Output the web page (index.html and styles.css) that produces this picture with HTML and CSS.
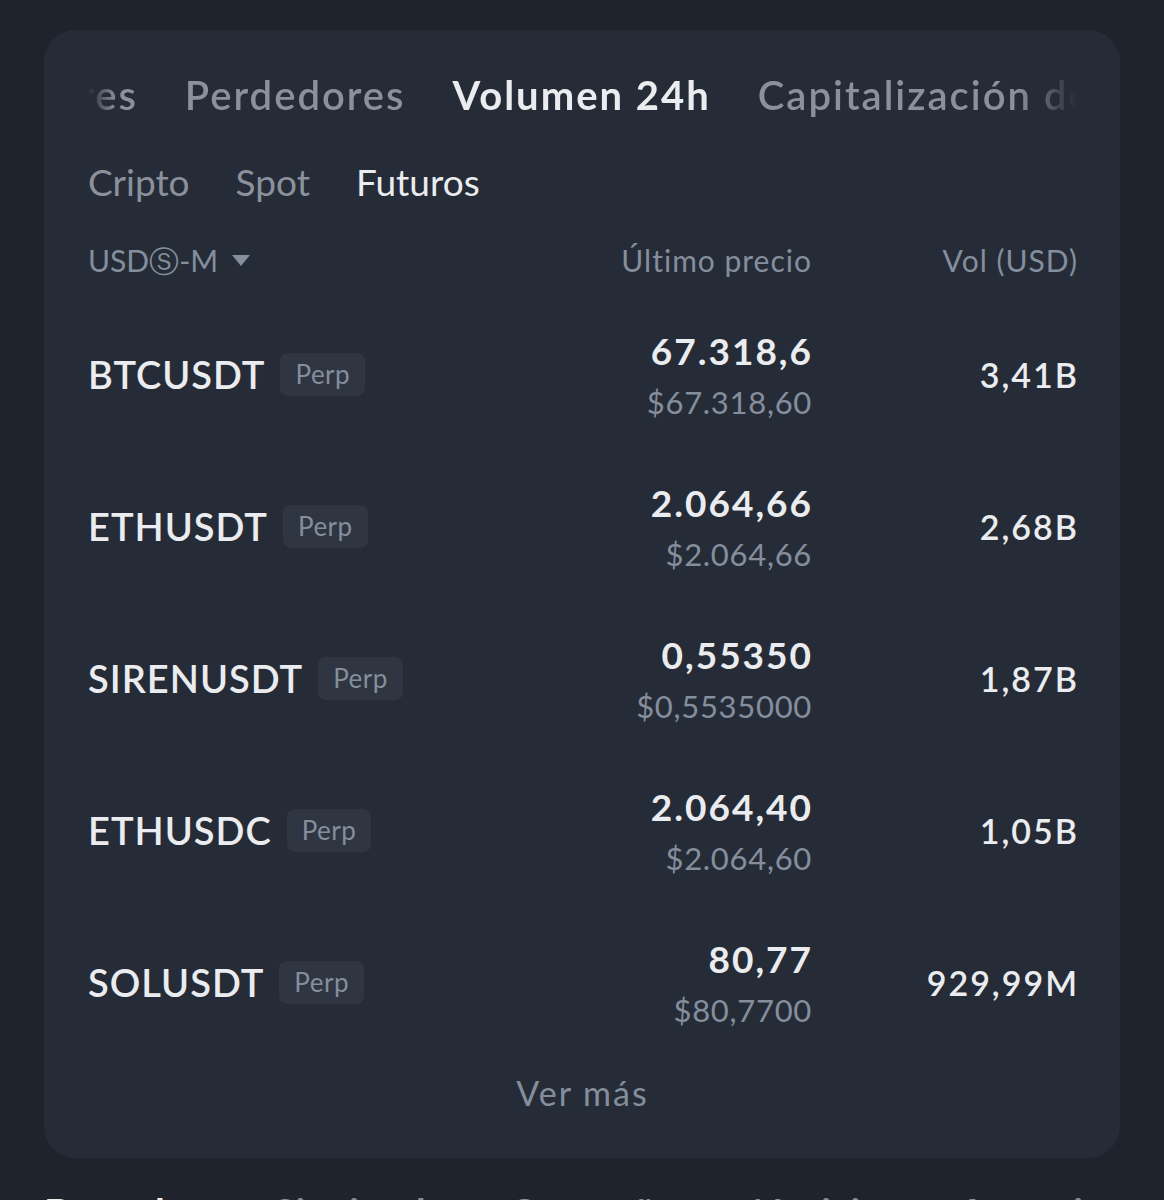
FILE: index.html
```html
<!DOCTYPE html>
<html lang="es">
<head>
    <meta charset="UTF-8">
    <meta name="viewport" content="width=device-width, initial-scale=1.0">
    <title>Mercados - Volumen 24h</title>
    <link rel="stylesheet" href="styles.css">
</head>
<body>
    <div class="card">
        <div class="tabs" id="tabs">
            <span class="tab">Ganadores</span>
            <span class="tab" id="first-visible">Perdedores</span>
            <span class="tab active">Volumen 24h</span>
            <span class="tab">Capitalización de mercado</span>
        </div>

        <div class="subtabs">
            <span class="subtab">Cripto</span>
            <span class="subtab">Spot</span>
            <span class="subtab active">Futuros</span>
        </div>

        <div class="table-head">
            <span class="market">USDⓈ-M <span class="caret"></span></span>
            <span class="col-right">Último precio</span>
            <span class="col-right">Vol (USD)</span>
        </div>

        <div class="rows">
            <div class="row">
                <div class="pair">BTCUSDT <span class="badge">Perp</span></div>
                <div class="price">
                    <div class="last">67.318,6</div>
                    <div class="fiat">$67.318,60</div>
                </div>
                <div class="vol">3,41B</div>
            </div>
            <div class="row">
                <div class="pair">ETHUSDT <span class="badge">Perp</span></div>
                <div class="price">
                    <div class="last">2.064,66</div>
                    <div class="fiat">$2.064,66</div>
                </div>
                <div class="vol">2,68B</div>
            </div>
            <div class="row">
                <div class="pair">SIRENUSDT <span class="badge">Perp</span></div>
                <div class="price">
                    <div class="last">0,55350</div>
                    <div class="fiat">$0,5535000</div>
                </div>
                <div class="vol">1,87B</div>
            </div>
            <div class="row">
                <div class="pair">ETHUSDC <span class="badge">Perp</span></div>
                <div class="price">
                    <div class="last">2.064,40</div>
                    <div class="fiat">$2.064,60</div>
                </div>
                <div class="vol">1,05B</div>
            </div>
            <div class="row">
                <div class="pair">SOLUSDT <span class="badge">Perp</span></div>
                <div class="price">
                    <div class="last">80,77</div>
                    <div class="fiat">$80,7700</div>
                </div>
                <div class="vol">929,99M</div>
            </div>
        </div>

        <div class="more">Ver más</div>
    </div>

    <div class="bottom-nav">
        <span class="nav-item active">Descubre</span>
        <span class="nav-item">Siguiendo</span>
        <span class="nav-item">Campañas</span>
        <span class="nav-item">Noticias</span>
        <span class="nav-item">Anuncios</span>
    </div>

    <script>
        // tab strip is scrolled so "Perdedores" sits a bit in from the left edge
        const tabs = document.getElementById('tabs');
        const first = document.getElementById('first-visible');
        tabs.scrollLeft = first.offsetLeft - tabs.offsetLeft - 97;
    </script>
</body>
</html>
```

FILE: styles.css
```css
body {
    margin: 0;
    padding: 30px 44px 0;
    background-color: #1f242c;
    font-family: Lato, "Open Sans", sans-serif;
    color: #eaecef;
    height: 1200px;
    box-sizing: border-box;
    overflow: hidden;
}
.card {
    padding: 40px 43px 45px 44px;
    background-color: #262c37;
    border-radius: 32px;
}
.tabs {
    display: flex;
    gap: 47px;
    height: 50px;
    line-height: 50px;
    overflow-x: auto;
    scrollbar-width: none;
    white-space: nowrap;
    -webkit-mask-image: linear-gradient(to right, transparent 0, #000 28px, #000 calc(100% - 60px), transparent 100%);
    mask-image: linear-gradient(to right, transparent 0, #000 28px, #000 calc(100% - 60px), transparent 100%);
}
.tab {
    font-size: 40px;
    font-weight: 600;
    letter-spacing: 2px;
    color: #8b919c;
}
.tab.active {
    color: #eaecef;
    font-weight: 700;
}
.subtabs {
    display: flex;
    gap: 46px;
    margin-top: 40px;
    line-height: 44px;
    font-size: 37px;
    color: #8b919c;
}
.subtab.active {
    color: #eaecef;
}
.table-head {
    display: grid;
    grid-template-columns: 1fr 300px 266px;
    margin-top: 38px;
    line-height: 36px;
    font-size: 30px;
    color: #848e9c;
}
.market {
    display: flex;
    align-items: center;
    gap: 14px;
}
.caret {
    width: 0;
    height: 0;
    border-left: 9px solid transparent;
    border-right: 9px solid transparent;
    border-top: 11px solid #848e9c;
}
.col-right {
    text-align: right;
    letter-spacing: 1px;
    margin-right: -1px;
}
.rows {
    margin-top: 20px;
}
.row {
    display: grid;
    grid-template-columns: 1fr 300px 266px;
    align-items: center;
    height: 152px;
}
.pair {
    display: flex;
    align-items: center;
    gap: 15px;
    font-size: 38px;
    font-weight: 600;
    letter-spacing: 1px;
}
.badge {
    padding: 0 15px;
    line-height: 43px;
    font-size: 26px;
    font-weight: 400;
    letter-spacing: 0.5px;
    color: #848e9c;
    background-color: #2f3541;
    border-radius: 8px;
}
.price {
    text-align: right;
}
.last {
    font-size: 37px;
    font-weight: 700;
    letter-spacing: 2px;
    line-height: 56px;
    margin-right: -2px;
}
.fiat {
    font-size: 31px;
    letter-spacing: 0.7px;
    color: #848e9c;
    line-height: 46px;
    margin-right: -1px;
}
.vol {
    text-align: right;
    font-size: 34px;
    font-weight: 600;
    letter-spacing: 2px;
    margin-right: -2px;
}
.more {
    margin-top: 15px;
    text-align: center;
    line-height: 40px;
    font-size: 34px;
    letter-spacing: 2px;
    color: #848e9c;
}
.bottom-nav {
    display: flex;
    gap: 60px;
    padding-top: 31px;
    font-size: 40px;
    font-weight: 700;
    color: #848e9c;
    white-space: nowrap;
}
.nav-item.active {
    color: #eaecef;
}
```
